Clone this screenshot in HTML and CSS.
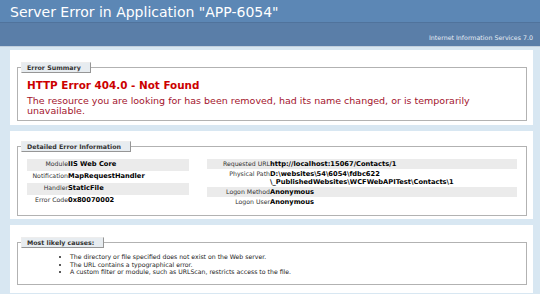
FILE: index.html
```html
<!DOCTYPE html>
<html>
<head>
    <meta charset="utf-8">
    <title>IIS 7.0 Detailed Error - 404.0 - Not Found</title>
    <link rel="stylesheet" href="styles.css">
</head>
<body>
    <div class="header">
        <h1>Server Error in Application "APP-6054"</h1>
    </div>
    <div class="server-version">Internet Information Services 7.0</div>

    <div class="content">
        <div class="panel summary">
            <fieldset>
                <legend>Error Summary</legend>
                <h2>HTTP Error 404.0 - Not Found</h2>
                <p class="summary-text">The resource you are looking for has been removed, had its name changed, or is temporarily unavailable.</p>
            </fieldset>
        </div>

        <div class="panel details">
            <fieldset>
                <legend>Detailed Error Information</legend>
                <div class="details-cols">
                    <table class="details-left">
                        <tr class="alt"><th>Module</th><td>IIS Web Core</td></tr>
                        <tr><th>Notification</th><td>MapRequestHandler</td></tr>
                        <tr class="alt"><th>Handler</th><td>StaticFile</td></tr>
                        <tr><th>Error Code</th><td>0x80070002</td></tr>
                    </table>
                    <table class="details-right">
                        <tr class="alt"><th>Requested URL</th><td>http://localhost:15067/Contacts/1</td></tr>
                        <tr><th>Physical Path</th><td>D:\websites\54\6054\fdbc622<br>\_PublishedWebsites\WCFWebAPITest\Contacts\1</td></tr>
                        <tr class="alt"><th>Logon Method</th><td>Anonymous</td></tr>
                        <tr><th>Logon User</th><td>Anonymous</td></tr>
                    </table>
                </div>
            </fieldset>
        </div>

        <div class="panel causes">
            <fieldset>
                <legend>Most likely causes:</legend>
                <ul>
                    <li>The directory or file specified does not exist on the Web server.</li>
                    <li>The URL contains a typographical error.</li>
                    <li>A custom filter or module, such as URLScan, restricts access to the file.</li>
                </ul>
            </fieldset>
        </div>
    </div>
</body>
</html>
```

FILE: styles.css
```css
body {
    margin: 0;
    background: #d8e7f2;
    font-family: "DejaVu Sans", Verdana, sans-serif;
    color: #000;
}

.header {
    height: 22px;
    background: #5c87b5;
    padding-left: 10px;
}

.header h1 {
    margin: 0;
    font-size: 14px;
    font-weight: normal;
    line-height: 24px;
    color: #fff;
}

.server-version {
    height: 25px;
    box-sizing: border-box;
    background: #5a7ea8;
    border-top: 1px solid #50739c;
    border-bottom: 1px solid #c1cfdd;
    padding: 11px 7px 0 0;
    text-align: right;
    font-size: 6.3px;
    color: #e6edf5;
}

.content {
    margin: 0 7px 0 10px;
}

.panel {
    background: #fff;
    margin-top: 3px;
    padding: 12px 6px 4px 7px;
}

.details {
    margin-top: 6px;
    padding-top: 10px;
    padding-bottom: 3px;
}

.causes {
    margin-top: 6px;
    padding-top: 12px;
    padding-bottom: 8px;
}

fieldset {
    margin: 0;
    border: 1px solid #b2b2b2;
    padding: 0 9px 4px 9px;
    min-width: 0;
}

legend {
    margin-left: -6px;
    padding: 1px 9px 1px 5px;
    background: #e7ecf0;
    border-top: 1px solid #ededed;
    border-left: 1px solid #ededed;
    border-right: 1px solid #969696;
    border-bottom: 1px solid #969696;
    font-size: 6.3px;
    font-weight: bold;
    line-height: 7px;
    color: #333;
}

.details fieldset {
    padding-bottom: 8px;
}

h2 {
    margin: 6px 0 5px 0;
    font-size: 10.4px;
    line-height: 12px;
    color: #c00;
}

.summary-text {
    margin: 0;
    font-size: 9.5px;
    line-height: 10px;
    color: #a3142d;
}

.details-cols {
    display: flex;
    gap: 18px;
    margin-top: 7px;
}

table {
    border-collapse: collapse;
    border-spacing: 0;
}

.details-left {
    width: 162px;
}

.details-right {
    flex: 1;
}

th, td {
    padding: 1px 0;
    vertical-align: top;
    text-align: left;
    line-height: 8px;
}

th {
    font-size: 6.2px;
    font-weight: normal;
    text-align: right;
    color: #333;
}

td {
    font-size: 6.7px;
    font-weight: bold;
}

.details-left th {
    width: 41px;
}

.details-right th {
    width: 63px;
}

tr.alt th, tr.alt td {
    background: #ebebeb;
}

ul {
    margin: 5px 0 4px 0;
    padding-left: 43px;
    font-size: 6.2px;
    line-height: 7.5px;
    color: #222;
}
```
